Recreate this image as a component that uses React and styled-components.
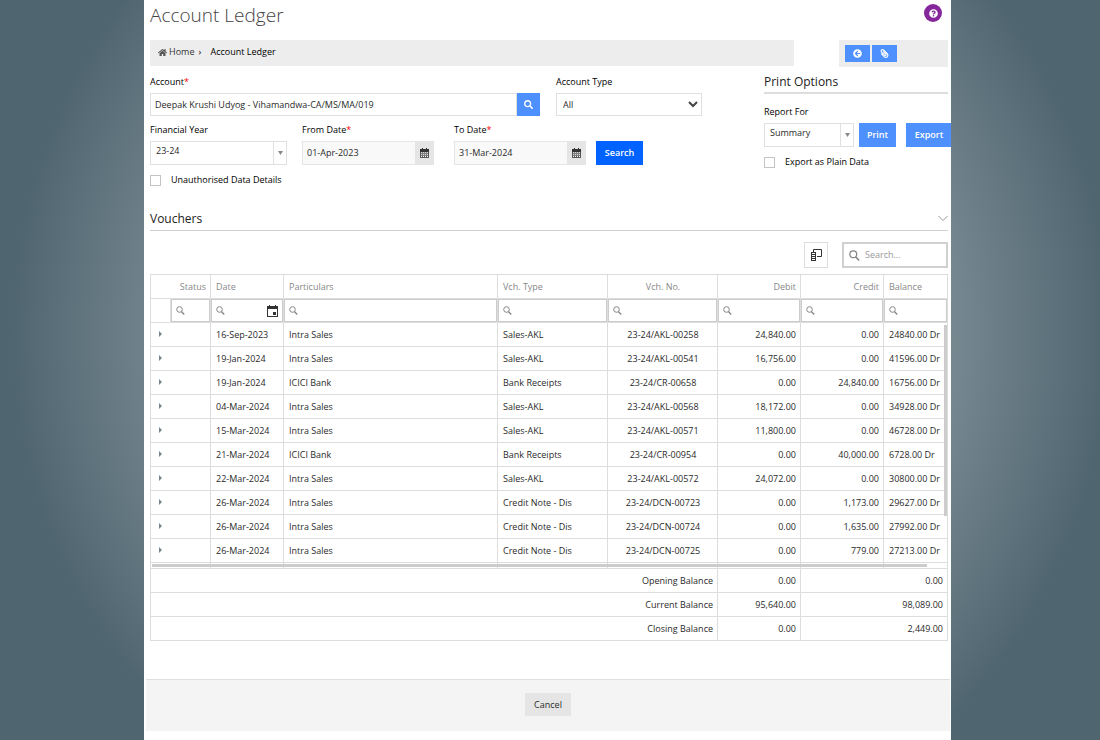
import React from "react";
import styled, { createGlobalStyle } from "styled-components";
import {
  FaHome,
  FaSearch,
  FaPaperclip,
  FaArrowCircleLeft,
  FaQuestionCircle,
} from "react-icons/fa";

const rows = [
  ["16-Sep-2023", "Intra Sales", "Sales-AKL", "23-24/AKL-00258", "24,840.00", "0.00", "24840.00 Dr"],
  ["19-Jan-2024", "Intra Sales", "Sales-AKL", "23-24/AKL-00541", "16,756.00", "0.00", "41596.00 Dr"],
  ["19-Jan-2024", "ICICI Bank", "Bank Receipts", "23-24/CR-00658", "0.00", "24,840.00", "16756.00 Dr"],
  ["04-Mar-2024", "Intra Sales", "Sales-AKL", "23-24/AKL-00568", "18,172.00", "0.00", "34928.00 Dr"],
  ["15-Mar-2024", "Intra Sales", "Sales-AKL", "23-24/AKL-00571", "11,800.00", "0.00", "46728.00 Dr"],
  ["21-Mar-2024", "ICICI Bank", "Bank Receipts", "23-24/CR-00954", "0.00", "40,000.00", "6728.00 Dr"],
  ["22-Mar-2024", "Intra Sales", "Sales-AKL", "23-24/AKL-00572", "24,072.00", "0.00", "30800.00 Dr"],
  ["26-Mar-2024", "Intra Sales", "Credit Note - Dis", "23-24/DCN-00723", "0.00", "1,173.00", "29627.00 Dr"],
  ["26-Mar-2024", "Intra Sales", "Credit Note - Dis", "23-24/DCN-00724", "0.00", "1,635.00", "27992.00 Dr"],
  ["26-Mar-2024", "Intra Sales", "Credit Note - Dis", "23-24/DCN-00725", "0.00", "779.00", "27213.00 Dr"],
];

const totals = [
  ["Opening Balance", "0.00", "0.00"],
  ["Current Balance", "95,640.00", "98,089.00"],
  ["Closing Balance", "0.00", "2,449.00"],
];

const columns = ["Date", "Particulars", "Vch. Type", "Vch. No.", "Debit", "Credit", "Balance"];
const aligns = ["left", "left", "left", "center", "right", "right", "left"];

const Lens = ({ size = 9 }) => (
  <svg width={size} height={size} viewBox="0 0 18 18" fill="none" stroke="#858585" strokeWidth="2">
    <circle cx="7" cy="7" r="5.6" />
    <path d="M11 11.5l5.6 5.6" strokeWidth="2.6" />
  </svg>
);

const CalendarIcon = () => (
  <svg width="11" height="12" viewBox="0 0 11 12">
    <path d="M2 0h1v1h5V0h1v1h2v11H0V1h2zM1 4v7h9V4z" fill="#333" fillRule="evenodd" />
    <path d="M6 7h3v3H6z" fill="#333" />
  </svg>
);

// small month grid used on the date pickers
const MonthIcon = () => (
  <svg width="9" height="10" viewBox="0 0 9 10">
    <path d="M2 0h1v1h3V0h1v1h2v3H0V1h2z" fill="#333" />
    <path d="M0 4h9v6H0z" fill="#555" />
    <path
      d="M1 4h1v1H1zM3 4h1v1H3zM5 4h1v1H5zM7 4h1v1H7zM1 6h1v1H1zM3 6h1v1H3zM5 6h1v1H5zM7 6h1v1H7zM1 8h1v1H1zM3 8h1v1H3zM5 8h1v1H5zM7 8h1v1H7z"
      fill="#fff"
    />
    <path d="M1 5h7M1 7h7" stroke="#aaa" />
  </svg>
);

const ColumnChooserIcon = () => (
  <svg width="12" height="12" viewBox="0 0 12 12" fill="none" stroke="#333">
    <path d="M3.5 3V.5h8v7H7" />
    <rect x="1.500" y="3.500" width="4" height="8" />
    <path d="M1 5.500h5M1 7.500h5M1 9.500h5" />
  </svg>
);

const ChevronIcon = () => (
  <svg width="10" height="7" viewBox="0 0 10 7" fill="none" stroke="#999">
    <path d="M.5 1L5 5.500 9.500 1" />
  </svg>
);

function Combo({ id, value }) {
  return (
    <ComboBox>
      <ComboSelect id={id} defaultValue={value}>
        <option>{value}</option>
      </ComboSelect>
      <ComboArrow>
        <svg width="5" height="4" viewBox="0 0 5 4">
          <path d="M0 0h5L2.500 4z" fill="#888" />
        </svg>
      </ComboArrow>
    </ComboBox>
  );
}

function DateField({ id, label, value }) {
  return (
    <Field>
      <Label htmlFor={id}>
        {label}
        <Required>*</Required>
      </Label>
      <DateBox>
        <DateInput id={id} defaultValue={value} />
        <DateButton type="button" aria-label={`Pick ${label}`}>
          <MonthIcon />
        </DateButton>
      </DateBox>
    </Field>
  );
}

function VoucherTable() {
  return (
    <Table>
      <colgroup>
        <Col $w={20} />
        <Col $w={40} />
        <Col $w={73} />
        <col />
        <Col $w={110} />
        <Col $w={110} />
        <Col $w={83} />
        <Col $w={83} />
        <Col $w={64} />
      </colgroup>
      <thead>
        <tr>
          <HeadCell colSpan={2} $align="right">Status</HeadCell>
          {columns.map((name, i) => (
            <HeadCell key={name} $align={aligns[i]}>{name}</HeadCell>
          ))}
        </tr>
        <tr>
          <BlankCell />
          {["Status", ...columns].map((name) => (
            <FilterCell key={name}>
              <FilterBox>
                <Lens />
                <FilterInput aria-label={`Filter ${name}`} />
                {name === "Date" && <CalendarIcon />}
              </FilterBox>
            </FilterCell>
          ))}
        </tr>
      </thead>
      <tbody>
        {rows.map((row) => (
          <tr key={row[3]}>
            <ExpandCell colSpan={2}>
              <ExpandButton type="button" aria-label="Expand row">
                <svg width="3" height="6" viewBox="0 0 3 6">
                  <path d="M0 0l3 3-3 3z" fill="#7b8790" />
                </svg>
              </ExpandButton>
            </ExpandCell>
            {row.map((text, i) => (
              <Cell key={i} $align={aligns[i]}>{text}</Cell>
            ))}
          </tr>
        ))}
        <tr>
          <ScrollCell colSpan={2} />
          {columns.map((name) => (
            <ScrollCell key={name} />
          ))}
        </tr>
      </tbody>
      <tfoot>
        {totals.map(([name, debit, credit]) => (
          <tr key={name}>
            <Cell colSpan={6} $align="right">{name}</Cell>
            <Cell $align="right">{debit}</Cell>
            <Cell colSpan={2} $align="right">{credit}</Cell>
          </tr>
        ))}
      </tfoot>
    </Table>
  );
}

export default function App() {
  return (
    <>
      <GlobalStyle />
      <Page>
        <Content>
          <Header>
            <Title>Account Ledger</Title>
            <HelpButton type="button" aria-label="Help">
              <FaQuestionCircle size={9} />
            </HelpButton>
          </Header>
          <TopBar>
            <Breadcrumb>
              <HomeLink href="#home">
                <FaHome size={9} color="#555" />
                Home
              </HomeLink>
              <Separator>›</Separator>
              <span>Account Ledger</span>
            </Breadcrumb>
            <Tools>
              <ToolButton type="button" aria-label="Back">
                <FaArrowCircleLeft size={9} />
              </ToolButton>
              <ToolButton type="button" aria-label="Attachments">
                <ClipIcon size={9} />
              </ToolButton>
            </Tools>
          </TopBar>

          <Filters>
            <Form>
              <AccountRow>
                <Field>
                  <Label htmlFor="account">
                    Account<Required>*</Required>
                  </Label>
                  <InputGroup>
                    <Input id="account" defaultValue="Deepak Krushi Udyog - Vihamandwa-CA/MS/MA/019" />
                    <LookupButton type="button" aria-label="Find account">
                      <FaSearch size={9} />
                    </LookupButton>
                  </InputGroup>
                </Field>
                <Field>
                  <Label htmlFor="type">Account Type</Label>
                  <SelectWrap>
                    <Select id="type">
                      <option>All</option>
                    </Select>
                    <SelectArrow width="10" height="7" viewBox="0 0 10 7">
                      <path d="M1 1l4 4 4-4" fill="none" stroke="#444" strokeWidth="2" />
                    </SelectArrow>
                  </SelectWrap>
                </Field>
              </AccountRow>
              <DateRow>
                <Field>
                  <Label htmlFor="year">Financial Year</Label>
                  <Combo id="year" value="23-24" />
                </Field>
                <DateField id="from" label="From Date" value="01-Apr-2023" />
                <DateField id="to" label="To Date" value="31-Mar-2024" />
                <SearchButton type="button">Search</SearchButton>
              </DateRow>
              <CheckLabel>
                <Checkbox type="checkbox" />
                Unauthorised Data Details
              </CheckLabel>
            </Form>

            <PrintPanel>
              <PanelTitle>Print Options</PanelTitle>
              <Label htmlFor="report">Report For</Label>
              <PrintRow>
                <Combo id="report" value="Summary" />
                <BlueButton type="button">Print</BlueButton>
                <ExportButton type="button">Export</ExportButton>
              </PrintRow>
              <CheckLabel>
                <Checkbox type="checkbox" />
                Export as Plain Data
              </CheckLabel>
            </PrintPanel>
          </Filters>

          <SectionHeader>
            <SectionTitle>Vouchers</SectionTitle>
            <ChevronIcon />
          </SectionHeader>

          <GridTools>
            <ChooserButton type="button" aria-label="Column chooser">
              <ColumnChooserIcon />
            </ChooserButton>
            <SearchBox>
              <Lens size={11} />
              <SearchInput aria-label="Search vouchers" placeholder="Search..." />
            </SearchBox>
          </GridTools>

          <TableWrap>
            <VoucherTable />
            <VerticalThumb />
            <HorizontalThumb />
          </TableWrap>
        </Content>
        <Footer>
          <CancelButton type="button">Cancel</CancelButton>
        </Footer>
      </Page>
    </>
  );
}

const GlobalStyle = createGlobalStyle`
  * {
    box-sizing: border-box;
  }

  body {
    margin: 0;
    min-height: 100vh;
    background: radial-gradient(circle at 51% 45%, #d6dee0 0, #4f6570 550px);
    font-family: "Open Sans", sans-serif;
    font-size: 9px;
    line-height: 12px;
    color: #2a2a2a;
  }

  button,
  input,
  select {
    font: inherit;
    color: inherit;
    margin: 0;
    padding: 0;
    border: 0;
    border-radius: 0;
    outline: none;
  }
`;

const Page = styled.main`
  min-height: 100vh;
  margin: 0 149px 0 144px;
  background: #fff;
  overflow: hidden;
`;

const Content = styled.div`
  padding: 0 3px 0 6px;
`;

const Header = styled.header`
  display: flex;
  justify-content: space-between;
  padding: 4px 6px 0 0;
  height: 40px;
`;

const Title = styled.h1`
  margin: 0;
  font-size: 19px;
  line-height: 22px;
  font-weight: 300;
  color: #444;
`;

const HelpButton = styled.button`
  display: flex;
  align-items: center;
  justify-content: center;
  width: 18px;
  height: 18px;
  border-radius: 50%;
  background: #85279a;
  color: #fff;
`;

const TopBar = styled.div`
  display: grid;
  grid-template-columns: 1fr 109px;
  gap: 45px;
`;

const Breadcrumb = styled.nav`
  display: flex;
  align-items: center;
  height: 26px;
  padding: 0 8px 2px;
  background: #ededed;
  color: #000;
`;

const HomeLink = styled.a`
  display: flex;
  align-items: center;
  gap: 2px;
  color: #333;
  text-decoration: none;
`;

const Separator = styled.span`
  width: 16px;
  padding-left: 4px;
`;

const Tools = styled.div`
  display: flex;
  align-items: center;
  gap: 2px;
  height: 27px;
  padding: 0 6px;
  background: #ededed;
`;

const BlueButton = styled.button`
  display: flex;
  align-items: center;
  justify-content: center;
  flex-shrink: 0;
  width: 37px;
  height: 24px;
  background: #4d90fe;
  color: #fff;
  font-weight: 600;
`;

const ToolButton = styled(BlueButton)`
  width: 25px;
  height: 17px;
`;

const ClipIcon = styled(FaPaperclip)`
  transform: scaleX(-1);
`;

const Filters = styled.div`
  display: grid;
  grid-template-columns: 1fr 184px;
  gap: 62px;
  padding-top: 9px;
`;

const Form = styled.form`
  min-width: 0;
`;

const AccountRow = styled.div`
  display: grid;
  grid-template-columns: 1fr 146px;
  gap: 16px;
`;

const DateRow = styled.div`
  display: grid;
  grid-template-columns: 152px 152px 142px 47px;
  align-items: end;
  margin: 8px 0 9px;
`;

const Field = styled.div`
  min-width: 0;
`;

const Label = styled.label`
  display: block;
  margin-bottom: 5px;
  color: #000;
`;

const Required = styled.span`
  color: #f00;
`;

const InputGroup = styled.div`
  display: flex;
`;

const Input = styled.input`
  flex: 1;
  min-width: 0;
  height: 23px;
  padding: 0 4px;
  border: 1px solid #e0e0e0;
`;

const LookupButton = styled(BlueButton)`
  width: 23px;
  height: 23px;
`;

const SelectWrap = styled.div`
  position: relative;
`;

const Select = styled.select`
  appearance: none;
  width: 100%;
  height: 23px;
  padding: 0 6px;
  border: 1px solid #e0e0e0;
  background: #fff;
`;

const SelectArrow = styled.svg`
  position: absolute;
  right: 4px;
  top: 8px;
  pointer-events: none;
`;

const ComboBox = styled.div`
  display: flex;
  flex-shrink: 0;
  width: 137px;
  height: 24px;
  border: 1px solid #e0e0e0;
`;

const ComboSelect = styled.select`
  appearance: none;
  flex: 1;
  min-width: 0;
  padding: 0 5px 4px;
  background: #fff;
`;

const ComboArrow = styled.span`
  display: flex;
  align-items: center;
  justify-content: center;
  width: 13px;
  border-left: 1px solid #e0e0e0;
  pointer-events: none;
`;

const DateBox = styled.div`
  display: flex;
  width: 132px;
  height: 24px;
  border: 1px solid #e5e5e5;
`;

const DateInput = styled.input`
  flex: 1;
  min-width: 0;
  padding: 0 4px;
  background: #f9f9f9;
`;

const DateButton = styled.button`
  display: flex;
  align-items: center;
  justify-content: center;
  width: 18px;
  background: #e5e5e5;
`;

const SearchButton = styled(BlueButton)`
  width: 47px;
  background: #0062ff;
`;

const CheckLabel = styled.label`
  display: flex;
  align-items: center;
  gap: 10px;
  color: #000;
`;

const Checkbox = styled.input`
  appearance: none;
  width: 11px;
  height: 11px;
  border: 1px solid #c4c4c4;
  background: #fff;
`;

const PrintPanel = styled.section`
  min-width: 0;
`;

const PanelTitle = styled.h2`
  margin: 0 0 12px;
  height: 18px;
  border-bottom: 2px solid #ddd;
  font-size: 12px;
  line-height: 12px;
  font-weight: 400;
  color: #222;
`;

const PrintRow = styled.div`
  display: flex;
  gap: 5px;
  margin-bottom: 9px;

  ${ComboBox} {
    width: 90px;
  }
`;

const ExportButton = styled(BlueButton)`
  width: 46px;
  margin-left: 5px;
`;

const SectionHeader = styled.div`
  display: flex;
  justify-content: space-between;
  align-items: center;
  height: 24px;
  margin-top: 21px;
  border-bottom: 1px solid #d0d0d0;
`;

const SectionTitle = styled.h2`
  margin: 0;
  font-size: 12px;
  line-height: 16px;
  font-weight: 400;
  color: #222;
`;

const GridTools = styled.div`
  display: flex;
  justify-content: flex-end;
  gap: 14px;
  padding: 11px 0 6px;
`;

const ChooserButton = styled.button`
  display: flex;
  align-items: center;
  justify-content: center;
  width: 24px;
  height: 26px;
  border: 1px solid #ddd;
  background: #fff;
`;

const SearchBox = styled.div`
  display: flex;
  align-items: center;
  gap: 5px;
  width: 106px;
  height: 26px;
  padding: 0 5px;
  border: 2px solid #d0d0d0;
`;

const SearchInput = styled.input`
  flex: 1;
  min-width: 0;

  &::placeholder {
    color: #999;
  }
`;

const TableWrap = styled.div`
  position: relative;
`;

const Table = styled.table`
  width: 100%;
  table-layout: fixed;
  border-collapse: collapse;
`;

const Col = styled.col`
  width: ${(props) => props.$w}px;
`;

const Cell = styled.td`
  height: 24px;
  padding: 0 4px 0 5px;
  border: 1px solid #ddd;
  text-align: ${(props) => props.$align};
  white-space: nowrap;
`;

const HeadCell = styled.th`
  height: 24px;
  padding: 0 4px 0 5px;
  border: 1px solid #ddd;
  text-align: ${(props) => props.$align};
  font-weight: 400;
  color: #888;
`;

const BlankCell = styled.td`
  border: 1px solid #ddd;
`;

const FilterCell = styled.td`
  height: 24px;
  padding: 0;
  border: 1px solid #ddd;
`;

const FilterBox = styled.div`
  display: flex;
  align-items: center;
  height: 23px;
  padding: 0 4px;
  border: 1px solid #ccc;
`;

const FilterInput = styled.input`
  flex: 1;
  min-width: 0;
  width: 0;
`;

const ExpandCell = styled.td`
  height: 24px;
  padding: 0 8px 2px;
  border: 1px solid #ddd;
`;

const ExpandButton = styled.button`
  display: flex;
  background: none;
`;

const ScrollCell = styled.td`
  height: 6px;
  padding: 0;
  border: 1px solid #ddd;
`;

const VerticalThumb = styled.div`
  position: absolute;
  top: 51px;
  right: 1px;
  width: 3px;
  height: 191px;
  background: #ccc;
`;

const HorizontalThumb = styled.div`
  position: absolute;
  left: 2px;
  right: 21px;
  bottom: 74px;
  height: 3px;
  background: #ccc;
`;

const Footer = styled.footer`
  display: flex;
  justify-content: center;
  margin: 38px 1px 9px 2px;
  padding: 13px 0 15px;
  border-top: 1px solid #e0e0e0;
  background: #f4f4f4;
`;

const CancelButton = styled.button`
  width: 46px;
  height: 23px;
  background: #e5e5e5;
`;
